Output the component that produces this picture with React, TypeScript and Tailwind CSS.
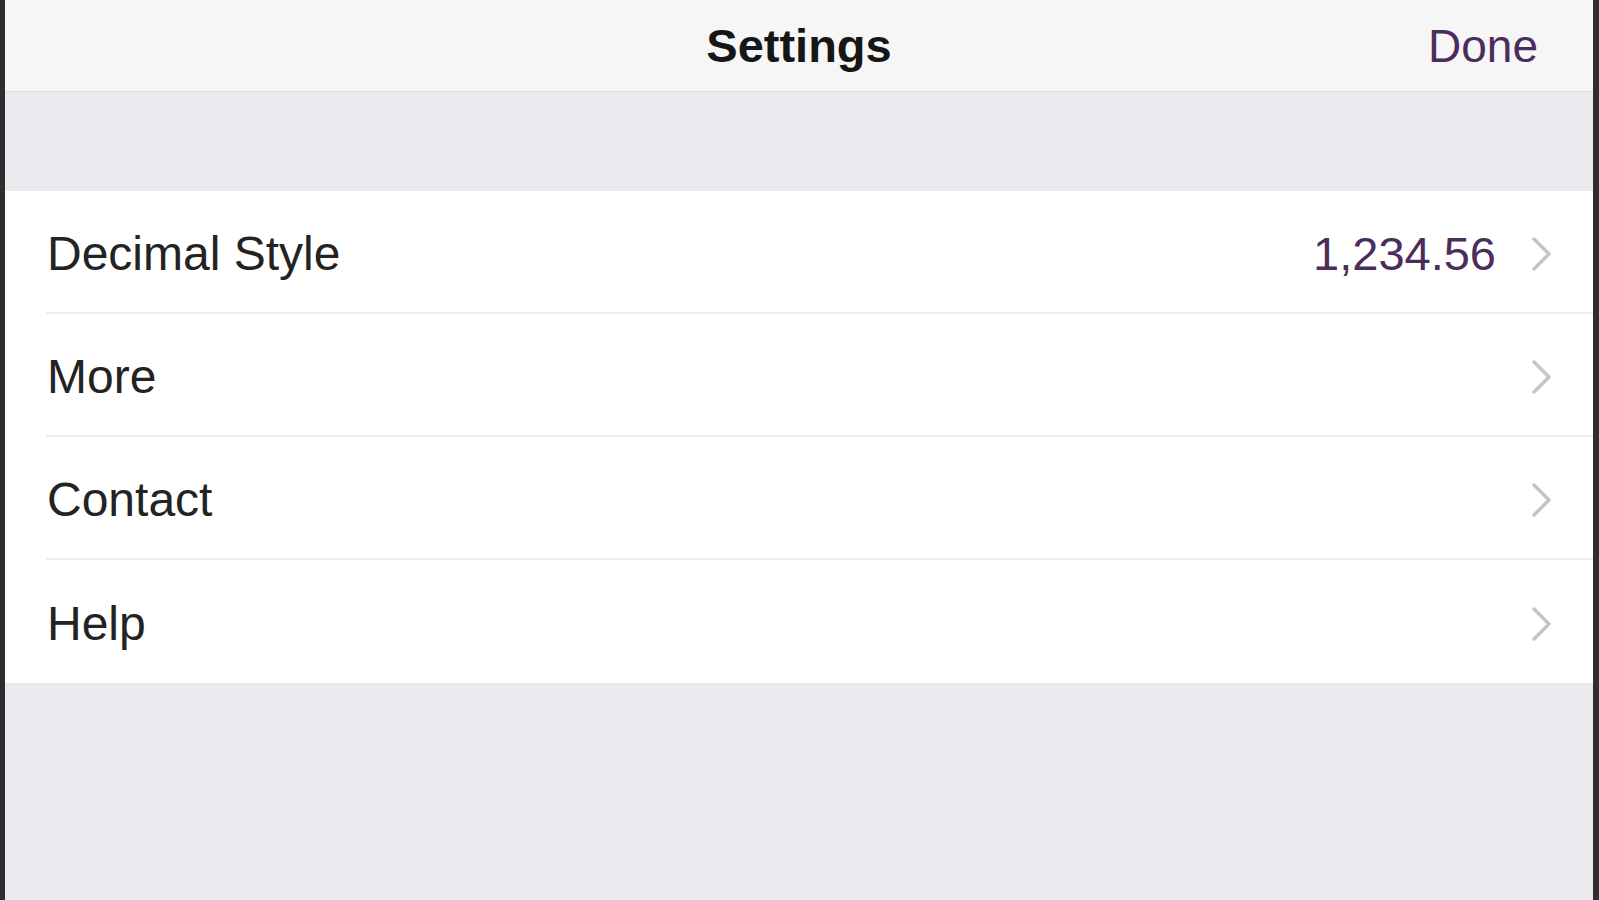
import React from "react";

const Chevron = () => (
  <svg width="22" height="36" viewBox="0 0 22 36" fill="none" className="shrink-0">
    <path d="M3 3 L18 18 L3 33" stroke="#c4c4c9" strokeWidth="3.5" strokeLinecap="round" strokeLinejoin="round" />
  </svg>
);

const rows: { label: string; value?: string }[] = [
  { label: "Decimal Style", value: "1,234.56" },
  { label: "More" },
  { label: "Contact" },
  { label: "Help" },
];

export default function App() {
  return (
    <div
      className="flex h-[900px] w-[1599px] overflow-hidden"
      style={{ fontFamily: '"Liberation Sans", Arial, sans-serif' }}
    >
      <div className="w-[5px] shrink-0 bg-[#2e2e2e]" />
      <div className="flex flex-1 flex-col bg-[#ebeaef]">
        <div className="relative flex h-[92px] shrink-0 items-center justify-center border-b border-[#dcdce0] bg-[#f6f6f6]">
          <span className="text-[47px] font-bold leading-none text-[#161616]">Settings</span>
          <span className="absolute right-[55px] top-1/2 -translate-y-1/2 text-[46px] leading-none text-[#4b2c5c]">
            Done
          </span>
        </div>
        <div className="h-[99px] shrink-0" />
        <div className="flex flex-col bg-white">
          {rows.map((r, i) => (
            <div key={r.label} className="flex h-[123px] pl-[41px]">
              <div
                className={`flex flex-1 items-center pr-[40px] pt-[4px] ${
                  i < rows.length - 1 ? "border-b-2 border-[#ededf0]" : ""
                }`}
              >
                <span className="ml-[1px] text-[48px] leading-none text-[#232323]">{r.label}</span>
                <div className="flex-1" />
                {r.value && (
                  <span className="mr-[35px] text-[47px] leading-none text-[#4b2c5c]">{r.value}</span>
                )}
                <Chevron />
              </div>
            </div>
          ))}
        </div>
        <div className="flex-1" />
      </div>
      <div className="w-[6px] shrink-0 bg-[#2e2e2e]" />
    </div>
  );
}
